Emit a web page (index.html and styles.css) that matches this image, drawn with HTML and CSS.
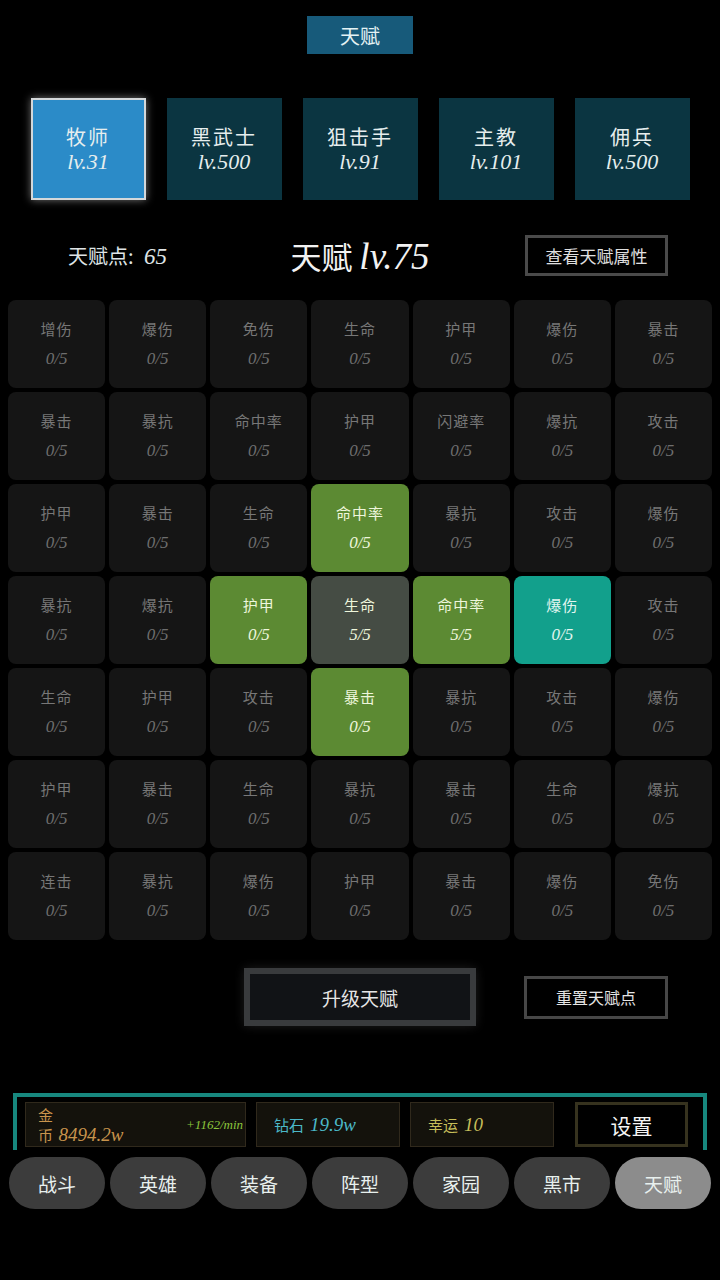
FILE: index.html
```html
<!DOCTYPE html>
<html lang="zh-CN">
<head>
<meta charset="UTF-8">
<meta name="viewport" content="width=device-width, initial-scale=1.0">
<title>天赋</title>
<link rel="stylesheet" href="styles.css">
</head>
<body>
<div class="page">
  <div class="title-wrap"><div class="title">天赋</div></div>

  <!-- 职业列表 -->
  <div class="classes">
    <div class="class-card active"><span class="cn">牧师</span><span class="lv">lv.31</span></div>
    <div class="class-card"><span class="cn">黑武士</span><span class="lv">lv.500</span></div>
    <div class="class-card"><span class="cn">狙击手</span><span class="lv">lv.91</span></div>
    <div class="class-card"><span class="cn">主教</span><span class="lv">lv.101</span></div>
    <div class="class-card"><span class="cn">佣兵</span><span class="lv">lv.500</span></div>
  </div>

  <div class="talent-head">
    <div class="points">天赋点: <i>65</i></div>
    <div class="level">天赋 <i>lv.75</i></div>
    <div class="view-btn">查看天赋属性</div>
  </div>

  <!-- 天赋格子 -->
  <div class="grid" id="grid"></div>

  <div class="actions">
    <div class="upgrade-btn">升级天赋</div>
    <div class="reset-btn">重置天赋点</div>
  </div>

  <div class="res-bar">
    <div class="res gold">
      <div class="gold-text"><span>金</span><span>币 <i>8494.2w</i></span></div>
      <i class="rate">+1162/min</i>
    </div>
    <div class="res diamond">钻石 <i>19.9w</i></div>
    <div class="res luck">幸运 <i>10</i></div>
    <div class="settings">设置</div>
  </div>

  <nav class="tabs">
    <div class="tab">战斗</div>
    <div class="tab">英雄</div>
    <div class="tab">装备</div>
    <div class="tab">阵型</div>
    <div class="tab">家园</div>
    <div class="tab">黑市</div>
    <div class="tab current">天赋</div>
  </nav>
</div>

<script>
  // 名称, 当前值, 状态
  const cells = [
    ['增伤'], ['爆伤'], ['免伤'], ['生命'], ['护甲'], ['爆伤'], ['暴击'],
    ['暴击'], ['暴抗'], ['命中率'], ['护甲'], ['闪避率'], ['爆抗'], ['攻击'],
    ['护甲'], ['暴击'], ['生命'], ['命中率', 0, 'green'], ['暴抗'], ['攻击'], ['爆伤'],
    ['暴抗'], ['爆抗'], ['护甲', 0, 'green'], ['生命', 5, 'done'], ['命中率', 5, 'green'], ['爆伤', 0, 'teal'], ['攻击'],
    ['生命'], ['护甲'], ['攻击'], ['暴击', 0, 'green'], ['暴抗'], ['攻击'], ['爆伤'],
    ['护甲'], ['暴击'], ['生命'], ['暴抗'], ['暴击'], ['生命'], ['爆抗'],
    ['连击'], ['暴抗'], ['爆伤'], ['护甲'], ['暴击'], ['爆伤'], ['免伤']
  ];

  const grid = document.getElementById('grid');
  cells.forEach(c => {
    const el = document.createElement('div');
    el.className = 'cell' + (c[2] ? ' ' + c[2] : '');
    el.innerHTML = '<span class="name">' + c[0] + '</span><i class="val">' + (c[1] || 0) + '/5</i>';
    grid.appendChild(el);
  });
</script>
</body>
</html>
```

FILE: styles.css
```css
html, body {
  margin: 0;
  background: #000;
}

body {
  font-family: "Noto Sans CJK SC", "Liberation Serif", serif;
  color: #e8eef0;
}

.page {
  width: 720px;
  height: 1280px;
  overflow: hidden;
}

i {
  font-family: "Liberation Serif", serif;
  font-style: italic;
}

.title-wrap {
  padding-top: 16px;
  display: flex;
  justify-content: center;
}

.title {
  width: 106px;
  height: 38px;
  background: #175a7a;
  display: flex;
  justify-content: center;
  align-items: center;
  font-size: 20px;
  color: #e4f2f4;
}

.classes {
  margin-top: 44px;
  display: flex;
  justify-content: center;
  gap: 21px;
}

.class-card {
  width: 115px;
  height: 102px;
  box-sizing: border-box;
  background: #0b3541;
  display: flex;
  flex-direction: column;
  justify-content: center;
  align-items: center;
  line-height: 25px;
  color: #e6eeee;
}

.class-card.active {
  background: #2b8bc8;
  border: 2px solid #d4d8da;
  box-shadow: 0 0 8px rgba(255, 255, 255, 0.45);
}

.class-card .cn {
  font-size: 20px;
  letter-spacing: 2px;
}

.class-card .lv {
  font-family: "Liberation Serif", serif;
  font-style: italic;
  font-size: 22px;
}

.talent-head {
  margin-top: 33px;
  height: 41px;
  display: grid;
  grid-template-columns: 1fr auto 1fr;
  align-items: center;
}

.points {
  justify-self: start;
  margin-left: 68px;
  font-size: 20px;
  color: #dfe4e6;
  white-space: nowrap;
}

.points i {
  font-size: 23px;
  margin-left: 6px;
}

.level {
  font-size: 31px;
  color: #f2f2f2;
}

.level i {
  font-size: 37px;
}

.view-btn {
  justify-self: end;
  margin-right: 52px;
  width: 143px;
  height: 41px;
  box-sizing: border-box;
  border: 3px solid #4a4a4a;
  display: flex;
  justify-content: center;
  align-items: center;
  font-size: 17px;
  color: #e0e0e0;
}

.grid {
  margin-top: 26px;
  padding: 0 8px;
  display: grid;
  grid-template-columns: repeat(7, 1fr);
  grid-auto-rows: 88px;
  gap: 4px 4px;
}

.cell {
  background: #151515;
  border-radius: 8px;
  display: flex;
  flex-direction: column;
  justify-content: center;
  align-items: center;
  gap: 10px;
  color: #777;
}

.cell .name {
  font-size: 15px;
  line-height: 20px;
  letter-spacing: 1px;
}

.cell .val {
  font-size: 17px;
  line-height: 20px;
  color: #6e6e6e;
}

.cell.green {
  background: #5c8a33;
}

.cell.done {
  background: #454c44;
}

.cell.teal {
  background: #12a08c;
}

.cell.green .name, .cell.green .val,
.cell.done .name, .cell.done .val {
  color: #eef6dc;
}

.cell.teal .name, .cell.teal .val {
  color: #e2f6f0;
}

.actions {
  margin-top: 28px;
  display: grid;
  grid-template-columns: 1fr auto 1fr;
  align-items: center;
}

.upgrade-btn {
  grid-column: 2;
  width: 232px;
  height: 58px;
  box-sizing: border-box;
  border: 6px solid #393b3d;
  background: #111316;
  box-shadow: 0 0 10px rgba(80, 80, 80, 0.35);
  display: flex;
  justify-content: center;
  align-items: center;
  font-size: 19px;
  color: #e6e6e6;
}

.reset-btn {
  justify-self: start;
  margin-left: 48px;
  width: 144px;
  height: 43px;
  box-sizing: border-box;
  border: 3px solid #474747;
  display: flex;
  justify-content: center;
  align-items: center;
  font-size: 16px;
  color: #e6e6e6;
}

.res-bar {
  margin-top: 67px;
  height: 57px;
  margin-left: 13px;
  margin-right: 13px;
  border-top: 4px solid #17887e;
  border-left: 4px solid #17887e;
  border-right: 4px solid #17887e;
  box-sizing: border-box;
  padding: 5px 8px 0 8px;
  display: flex;
  gap: 10px;
}

.res {
  height: 45px;
  box-sizing: border-box;
  background: #14120c;
  border: 1px solid #30291c;
  display: flex;
  align-items: center;
  font-size: 15px;
}

.res i {
  font-size: 19px;
  margin-left: 6px;
}

.gold {
  width: 221px;
  justify-content: space-between;
  padding-left: 12px;
  padding-right: 2px;
  color: #c8944c;
}

.gold-text {
  display: flex;
  flex-direction: column;
  line-height: 20px;
}

.gold-text i {
  margin-left: 2px;
}

.gold .rate {
  font-size: 13px;
  margin-left: 0;
  color: #8cc63c;
  white-space: nowrap;
}

.diamond {
  width: 144px;
  padding-left: 17px;
  color: #4bb8c8;
}

.luck {
  width: 144px;
  padding-left: 17px;
  color: #c6be5a;
}

.settings {
  margin-left: 11px;
  width: 113px;
  height: 45px;
  box-sizing: border-box;
  border: 3px solid #36321e;
  display: flex;
  justify-content: center;
  align-items: center;
  font-size: 21px;
  color: #f4f4f4;
}

.tabs {
  margin-top: 7px;
  padding: 0 9px;
  display: grid;
  grid-template-columns: repeat(7, 1fr);
  gap: 5px;
}

.tab {
  height: 52px;
  border-radius: 26px;
  background: #3c3c3c;
  display: flex;
  justify-content: center;
  align-items: center;
  font-size: 19px;
  color: #e8f0ee;
}

.tab.current {
  background: #8c8c8c;
}
```
